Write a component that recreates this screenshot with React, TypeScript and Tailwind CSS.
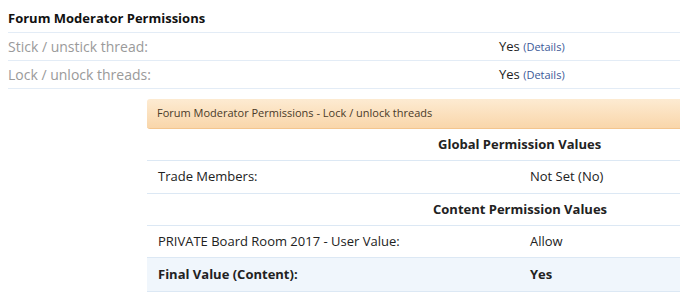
const font = "font-['Open_Sans','DejaVu_Sans',sans-serif]"

interface RowProps {
  label: string
  value: string
}

function PermRow({ label, value }: RowProps) {
  return (
    <div className="flex h-[28px] items-center border-b border-[#e3ecf6]">
      <div className="w-[491px] text-[14px] text-[#9a9a9a]">{label}</div>
      <div className="text-[13px] text-[#222]">
        {value} <span className="text-[11px] text-[#3b5998]">(Details)</span>
      </div>
    </div>
  )
}

function DetailRow({ label, value, height, bold }: { label: string; value: string; height: string; bold?: boolean }) {
  return (
    <div
      className={`flex items-center border-b border-[#dce8f4] pl-[11px] text-[13px] text-[#222] ${height} ${
        bold ? 'bg-[#f0f6fc] font-bold' : ''
      }`}
    >
      <div className="w-[372px]">{label}</div>
      <div>{value}</div>
    </div>
  )
}

function SectionHead({ title, indent }: { title: string; indent: string }) {
  return (
    <div className={`flex h-[32px] items-center border-b border-[#dce8f4] text-[13px] font-bold text-[#222] ${indent}`}>
      {title}
    </div>
  )
}

export default function App() {
  return (
    <div className={`h-[300px] w-[680px] overflow-hidden bg-white pl-[8px] ${font}`}>
      <div className="flex h-[33px] items-center border-b border-[#e3ecf6] pt-[5px] text-[13px] font-bold text-[#111]">
        Forum Moderator Permissions
      </div>
      <PermRow label="Stick / unstick thread:" value="Yes" />
      <PermRow label="Lock / unlock threads:" value="Yes" />

      <div className="ml-[139px] mt-[10px] w-[560px]">
        <div className="flex h-[30px] items-center rounded-l-[3px] border-b border-[#f3c58e] bg-gradient-to-b from-[#fdebd2] to-[#f9d6aa] pl-[10px] text-[11px] text-[#4a3a28]">
          Forum Moderator Permissions - Lock / unlock threads
        </div>
        <SectionHead title="Global Permission Values" indent="pl-[291px]" />
        <DetailRow label="Trade Members:" value="Not Set (No)" height="h-[33px]" />
        <SectionHead title="Content Permission Values" indent="pl-[286px]" />
        <DetailRow label="PRIVATE Board Room 2017 - User Value:" value="Allow" height="h-[32px]" />
        <DetailRow label="Final Value (Content):" value="Yes" height="h-[34px]" bold />
      </div>
    </div>
  )
}
